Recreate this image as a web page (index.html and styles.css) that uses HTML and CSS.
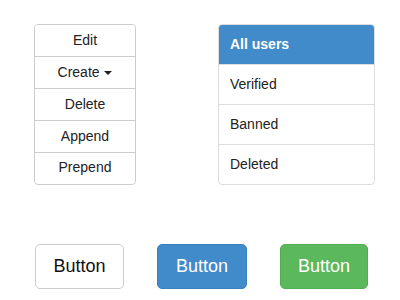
FILE: index.html
```html
<!DOCTYPE html>
<html>
<head>
    <link rel="stylesheet" href="styles.css">
</head>
<body>
    <main class="page">
        <div class="top">
            <div class="btn-group">
                <button class="group-item">Edit</button>
                <button class="group-item">Create <span class="caret"></span></button>
                <button class="group-item">Delete</button>
                <button class="group-item">Append</button>
                <button class="group-item">Prepend</button>
            </div>
            <div class="list-group">
                <a class="list-item active">All users</a>
                <a class="list-item">Verified</a>
                <a class="list-item">Banned</a>
                <a class="list-item">Deleted</a>
            </div>
        </div>
        <div class="buttons">
            <button class="btn btn-default">Button</button>
            <button class="btn btn-primary">Button</button>
            <button class="btn btn-success">Button</button>
        </div>
    </main>
</body>
</html>
```

FILE: styles.css
```css
* {
    box-sizing: border-box;
}
body {
    margin: 0;
    background: #fff;
    font-family: "Liberation Sans", Arial, sans-serif;
    font-size: 14px;
    color: #222;
}
.page {
    padding: 24px 0 0 34px;
}
.top {
    display: flex;
    gap: 82px;
}
.btn-group {
    display: flex;
    flex-direction: column;
    width: 102px;
    border: 1px solid #ccc;
    border-radius: 4px;
    overflow: hidden;
}
.group-item {
    height: 32px;
    border: 0;
    border-top: 1px solid #ccc;
    background: #fff;
    font-family: inherit;
    font-size: 14px;
    color: #222;
    padding: 0 0 2px;
}
.group-item:first-child {
    height: 31px;
    border-top: 0;
}
.group-item:last-child {
    height: 31px;
}
.caret {
    display: inline-block;
    width: 0;
    height: 0;
    margin-left: 1px;
    vertical-align: middle;
    border-top: 4px solid #222;
    border-left: 4px solid transparent;
    border-right: 4px solid transparent;
}
.list-group {
    display: flex;
    flex-direction: column;
    width: 157px;
    border: 1px solid #ddd;
    border-radius: 4px;
    overflow: hidden;
}
.list-item {
    display: flex;
    align-items: center;
    height: 40px;
    padding: 0 0 2px 11px;
    border-top: 1px solid #ddd;
    color: #222;
}
.list-item.active {
    height: 39px;
    border-top: 0;
    background: #428bca;
    color: #fff;
    font-weight: bold;
}
.buttons {
    display: flex;
    gap: 33px;
    margin-top: 59px;
    padding-left: 1px;
}
.btn {
    width: 89px;
    height: 45px;
    border-radius: 5px;
    border: 1px solid #ccc;
    background: #fff;
    font-family: inherit;
    font-size: 18px;
    color: #111;
    padding: 0;
}
.btn-primary {
    width: 90px;
    background: #428bca;
    border-color: #3a80bd;
    color: #fff;
}
.btn-success {
    width: 88px;
    background: #5cb85c;
    border-color: #50ad50;
    color: #fff;
}
```
